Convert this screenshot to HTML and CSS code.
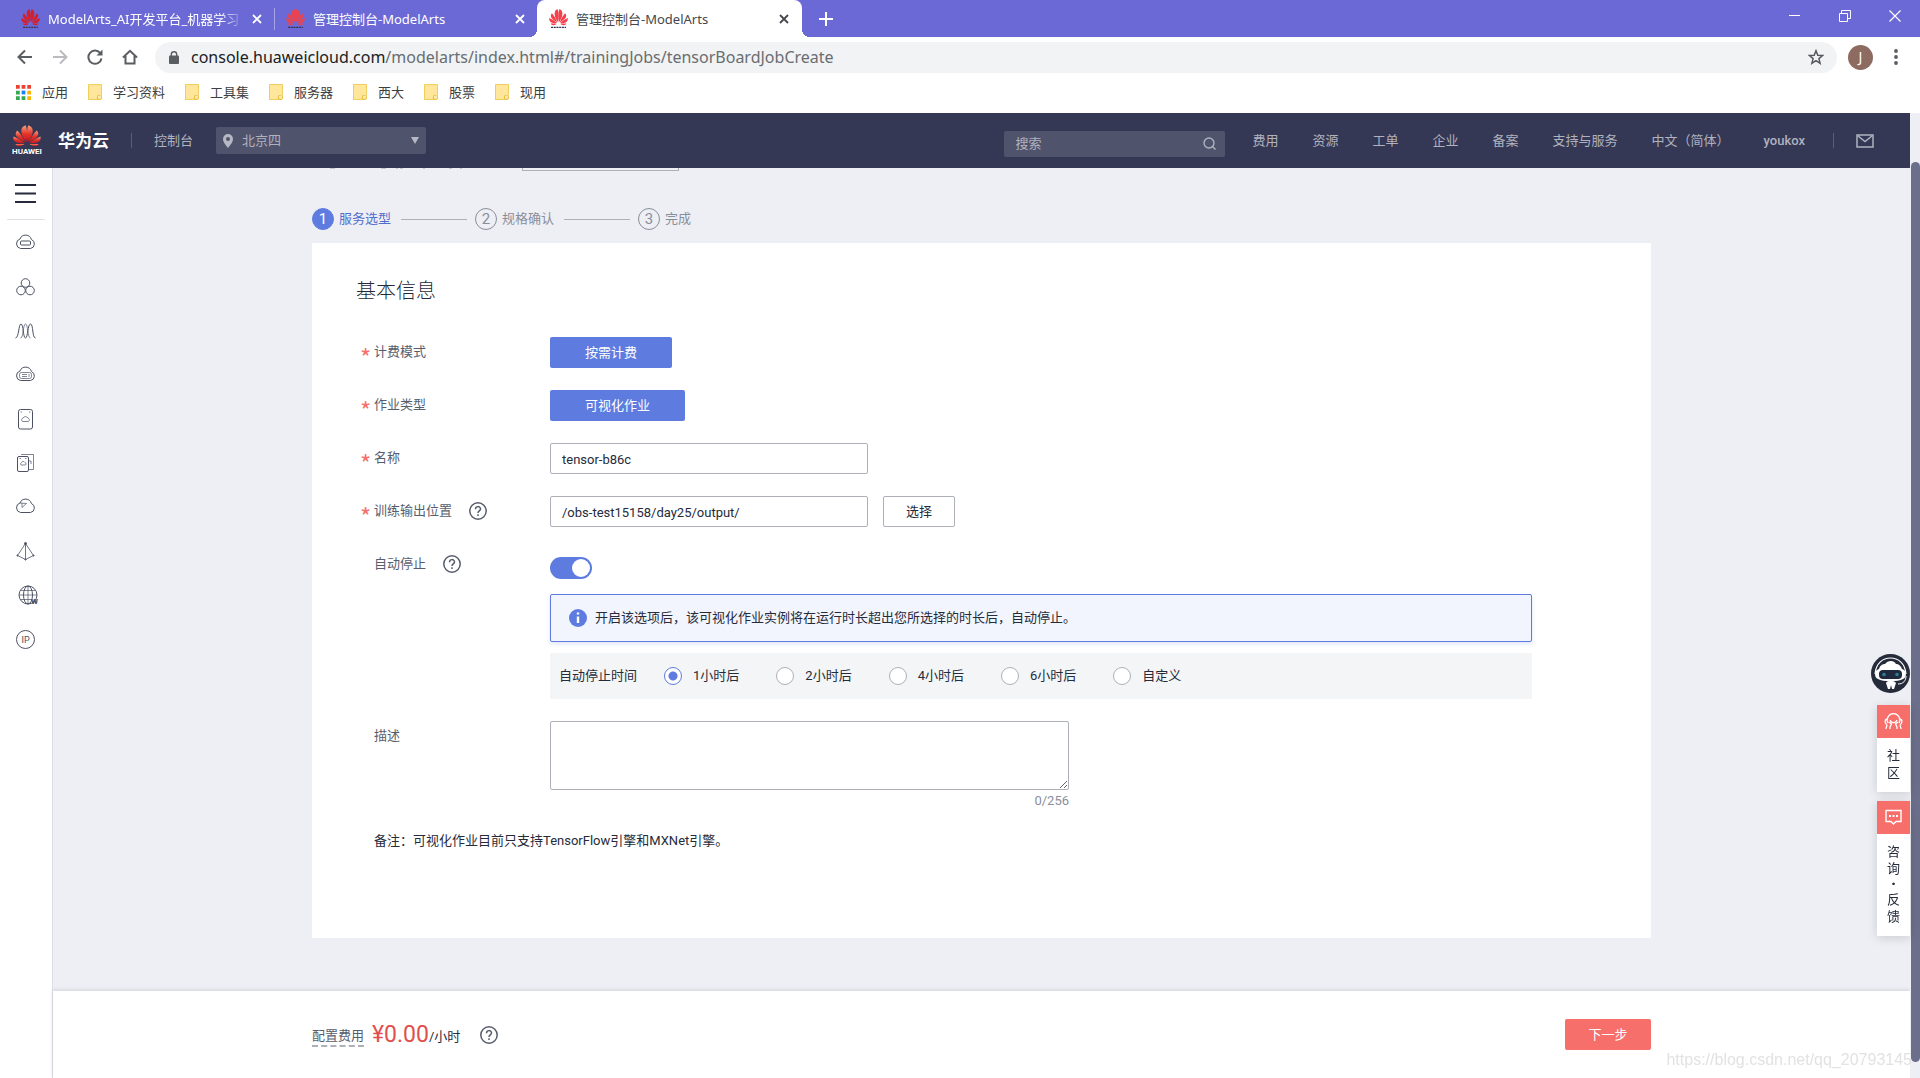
FILE: index.html
```html
<!DOCTYPE html>
<html lang="zh-CN">
<head>
<meta charset="utf-8">
<title>管理控制台-ModelArts</title>
<link rel="stylesheet" href="styles.css">
</head>
<body>
<svg class="defs" aria-hidden="true">
  <defs>
    <linearGradient id="petal" x1="0" y1="0" x2="0" y2="1"><stop offset="0" stop-color="#f6a07c"/><stop offset=".5" stop-color="#e4342c"/><stop offset="1" stop-color="#c5161d"/></linearGradient>
    <g id="flower">
      <path d="M13.4 19.5C9 14 7.6 8 8.6 4.400C9.400 2 11 .8 12.900.5C14.500 6 14.400 13 13.400 19.500Z"/>
      <path d="M14.600 19.500C19 14 20.400 8 19.400 4.400C18.600 2 17 .8 15.100.5C13.500 6 13.600 13 14.600 19.500Z"/>
      <path d="M12.300 19.900C10 14 7 9 4.300 6.200C2.500 8 2.200 10.400 3.400 12.600C5.200 15.700 8.800 18 12.300 19.900Z"/>
      <path d="M15.700 19.900C18 14 21 9 23.700 6.200C25.500 8 25.800 10.400 24.600 12.600C22.800 15.700 19.200 18 15.700 19.900Z"/>
      <path d="M11.800 20.800C8 17.500 4 14.600.6 13.200C-.2 15.600.8 18 2.900 19.400C5.400 20.900 8.800 21 11.800 20.800Z"/>
      <path d="M16.200 20.800C20 17.500 24 14.600 27.400 13.200C28.200 15.600 27.200 18 25.100 19.400C22.600 20.900 19.200 21 16.200 20.800Z"/>
      <path d="M11.600 21.700C8.500 21.500 5 21.400 2.300 21.500C3.300 23.400 4.900 24.300 6.700 24C8.700 23.700 10.200 22.700 11.600 21.700Z"/>
      <path d="M16.400 21.700C19.500 21.500 23 21.400 25.700 21.500C24.700 23.400 23.100 24.300 21.300 24C19.300 23.700 17.800 22.700 16.400 21.700Z"/>
    </g>
    <g id="favicon"><use href="#flower"/><path d="M3 27H25" stroke="#3b3350" stroke-width="2" stroke-dasharray="3 1"/></g>
    <g id="help"><circle cx="9" cy="9" r="8.200" fill="none" stroke="currentColor" stroke-width="1.500"/><path d="M6.500 7.200C6.500 3.800 11.500 3.800 11.500 7C11.500 8.900 9 8.900 9 11M9 12.300V13.900" fill="none" stroke="currentColor" stroke-width="1.500"/></g>
    <g id="folder"><path d="M.5 1.500H10.500V15.500H.5Z" fill="#ffe69a" stroke="#f0cf60"/><path d="M.5.5H10.500V11.500L8.500 15.500H.5Z" fill="#ffe69a" stroke="#f0cf60"/><rect x="9.500" y="11" width="4" height="4.500" rx="1.500" fill="#ffe9a8" stroke="#e8bf3a"/><path d="M10 1H13V11H10Z" fill="#ffe69a"/><path d="M10 .5H13.500V11" fill="none" stroke="#f0cf60"/></g>
    <g id="cross"><path d="M1 1L9 9M9 1L1 9" stroke="currentColor" stroke-width="1.800"/></g>
    <g id="cloud"><path d="M5.500 15.500H15.500A4.700 4.700 0 0 0 16.400 6.500A6 6 0 0 0 5 6A4.900 4.900 0 0 0 5.500 15.500Z"/></g>
  </defs>
</svg>

<header class="chrome">
  <div class="tabs">
    <div class="tab first">
      <svg class="fav" viewBox="0 0 28 28" fill="#d3202c"><use href="#favicon"/></svg>
      <span class="tab-title fade">ModelArts_AI开发平台_机器学习</span>
      <button class="tab-close" aria-label="关闭标签页"><svg width="10" height="10"><use href="#cross"/></svg></button>
    </div>
    <div class="tab second">
      <svg class="fav" viewBox="0 0 28 28" fill="#e8434e"><use href="#favicon"/></svg>
      <span class="tab-title">管理控制台-ModelArts</span>
      <button class="tab-close" aria-label="关闭标签页"><svg width="10" height="10"><use href="#cross"/></svg></button>
    </div>
    <div class="tab active">
      <svg class="fav" viewBox="0 0 28 28" fill="#f5404c"><use href="#favicon"/></svg>
      <span class="tab-title">管理控制台-ModelArts</span>
      <button class="tab-close" aria-label="关闭标签页"><svg width="10" height="10"><use href="#cross"/></svg></button>
    </div>
    <button class="new-tab" aria-label="新标签页"><svg width="14" height="14"><path d="M7 0V14M0 7H14" stroke="#fff" stroke-width="2"/></svg></button>
    <div class="window-buttons">
      <button aria-label="最小化"><svg width="12" height="12"><path d="M0 5.500H11" stroke="#fff"/></svg></button>
      <button aria-label="还原"><svg width="12" height="12" fill="none" stroke="#fff"><path d="M.5 3.500H8.500V11.500H.5ZM2.500 3.500V.5H11.500V8.500H8.500"/></svg></button>
      <button aria-label="关闭"><svg width="12" height="12"><path d="M.5.5L11.500 11.500M11.500.5L.5 11.500" stroke="#fff" stroke-width="1.200"/></svg></button>
    </div>
  </div>

  <div class="address-row">
    <button class="nav-button" aria-label="后退"><svg width="16" height="16" fill="none" stroke="#5a5d61" stroke-width="2"><path d="M15 8H2M8 1.500L1.500 8L8 14.500"/></svg></button>
    <button class="nav-button" aria-label="前进"><svg width="16" height="16" fill="none" stroke="#b9bbbe" stroke-width="2"><path d="M1 8H14M8 1.500L14.500 8L8 14.500"/></svg></button>
    <button class="nav-button" aria-label="刷新"><svg width="16" height="16" fill="none" stroke="#5a5d61" stroke-width="2"><path d="M13.500 4.500A6.600 6.600 0 1 0 14.500 9.500"/><path d="M15.500 .5V6.500H9.500Z" fill="#5a5d61" stroke="none"/></svg></button>
    <button class="nav-button" aria-label="主页"><svg width="16" height="16" fill="none" stroke="#5a5d61" stroke-width="2"><path d="M1 8.500L8 1.800L15 8.500M3.500 7V14.500H12.500V7"/></svg></button>
    <div class="omnibox">
      <svg width="10" height="13"><rect y="4.500" width="10" height="8.500" rx="1" fill="#5a5d61"/><path d="M2.300 5V3.400A2.700 2.700 0 0 1 7.700 3.400V5" fill="none" stroke="#5a5d61" stroke-width="1.400"/></svg>
      <span class="url"><b>console.huaweicloud.com</b>/modelarts/index.html#/trainingJobs/tensorBoardJobCreate</span>
      <button aria-label="收藏"><svg width="16" height="16" viewBox="0 0 16 16" fill="none" stroke="#55585c" stroke-width="1.500"><path d="M8 1.700L9.800 6.200L14.600 6.500L10.900 9.600L12.100 14.300L8 11.700L3.900 14.300L5.100 9.600L1.400 6.500L6.200 6.200Z"/></svg></button>
    </div>
    <button class="avatar">J</button>
    <button class="more" aria-label="更多"><svg width="4" height="16" fill="#5a5d61"><circle cx="2" cy="2" r="1.900"/><circle cx="2" cy="8" r="1.900"/><circle cx="2" cy="14" r="1.900"/></svg></button>
  </div>

  <nav class="bookmarks">
    <a href="#"><svg width="15" height="15" viewBox="0 0 16 16"><g fill="#ea4335"><path d="M0 0h4v4H0zM6 0h4v4H6zM12 0h4v4h-4z"/></g><path d="M0 6h4v4H0zM0 12h4v4H0zM6 12h4v4H6z" fill="#34a853"/><path d="M6 6h4v4H6z" fill="#1a82f0"/><path d="M12 6h4v4h-4zM12 12h4v4h-4z" fill="#fbb605"/></svg>应用</a>
    <a href="#"><svg width="14" height="16"><use href="#folder"/></svg>学习资料</a>
    <a href="#"><svg width="14" height="16"><use href="#folder"/></svg>工具集</a>
    <a href="#"><svg width="14" height="16"><use href="#folder"/></svg>服务器</a>
    <a href="#"><svg width="14" height="16"><use href="#folder"/></svg>西大</a>
    <a href="#"><svg width="14" height="16"><use href="#folder"/></svg>股票</a>
    <a href="#"><svg width="14" height="16"><use href="#folder"/></svg>现用</a>
  </nav>
</header>

<div class="viewport">
  <div class="app">
    <header class="topbar">
      <a class="logo" href="#" aria-label="HUAWEI">
        <svg width="28" height="22" viewBox="0 0 28 25" preserveAspectRatio="none" fill="url(#petal)"><use href="#flower"/></svg>
        <span class="logo-word">HUAWEI</span>
      </a>
      <span class="brand">华为云</span>
      <span class="divider"></span>
      <a class="console" href="#">控制台</a>
      <button class="region">
        <svg width="10" height="14"><path d="M5 0A5 5 0 0 0 0 5C0 8.500 5 14 5 14S10 8.500 10 5A5 5 0 0 0 5 0ZM5 3A2 2 0 1 1 5 7A2 2 0 0 1 5 3Z" fill="#b6b8c4" fill-rule="evenodd"/></svg>
        <span>北京四</span>
        <svg width="8" height="7"><path d="M0 0H8L4 7Z" fill="#b6b8c4"/></svg>
      </button>
      <div class="search">
        <input type="search" placeholder="搜索" aria-label="搜索">
        <svg width="13" height="13" fill="none" stroke="#b0b2be" stroke-width="1.400"><circle cx="6" cy="6" r="5"/><path d="M9 9L12.500 12.500"/></svg>
      </div>
      <nav class="topnav">
        <a href="#">费用</a><a href="#">资源</a><a href="#">工单</a><a href="#">企业</a><a href="#">备案</a><a href="#">支持与服务</a><a href="#">中文（简体）</a><a class="user" href="#">youkox</a>
      </nav>
      <span class="divider"></span>
      <a class="mail" href="#" aria-label="消息"><svg width="18" height="14" fill="none" stroke="#b0b2be" stroke-width="1.500"><rect x="1" y="1" width="16" height="12"/><path d="M1.500 1.500L9 7.500L16.500 1.500"/></svg></a>
    </header>

    <div class="workspace">
      <nav class="sidebar">
        <button class="menu" aria-label="菜单"><svg width="21" height="19"><path d="M0 1H21M0 9.500H21M0 18H21" stroke="#252b3a" stroke-width="2"/></svg></button>
        <a href="#" aria-label="弹性云服务器"><svg><use href="#cloud"/><rect x="5.500" y="8" width="10" height="4" rx="1"/></svg></a>
        <a href="#" aria-label="弹性伸缩"><svg><circle cx="10.500" cy="6" r="4.300"/><circle cx="6" cy="13.500" r="4.300"/><circle cx="15" cy="13.500" r="4.300"/></svg></a>
        <a href="#" aria-label="ModelArts"><svg><path d="M.5 17C4 17 3.500 3 6 3S8 17 10.500 17S12.500 3 15.500 3S17 17 20.500 17"/><path d="M5.500 17C8.500 17 8 3 10.500 3S12.500 17 15.500 17" stroke-width=".7"/></svg></a>
        <a href="#" aria-label="裸金属服务器"><svg><use href="#cloud"/><rect x="4.500" y="7.500" width="12" height="6" rx="2" stroke-width=".7"/><path d="M7 9.500H12M7 11.500H12M14 9V12" stroke-width=".7"/></svg></a>
        <a href="#" aria-label="云硬盘"><svg><rect x="3.500" y=".5" width="14" height="19.500" rx="2"/><path d="M7.500 12.500H13.500A2 2 0 0 0 13 9A3 3 0 0 0 8 9A2 2 0 0 0 7.500 12.500ZM5.500 3H7M14 3H15.500" stroke-width=".7"/></svg></a>
        <a href="#" aria-label="云硬盘备份"><svg><rect x="2.500" y="3.500" width="11" height="15" rx="1.500"/><path d="M6 1.500H18.500V16.500H14M6 12H10.500A1.500 1.500 0 0 0 10 9.500A2 2 0 0 0 6.500 9.500A1.500 1.500 0 0 0 6 12ZM4.500 5.500H6M10 5.500H11.500M14 8H16V11" stroke-width=".7"/></svg></a>
        <a href="#" aria-label="对象存储"><svg><use href="#cloud"/><path d="M5 6L11.500 6.500L7 10.500V6" stroke-width=".7"/></svg></a>
        <a href="#" aria-label="虚拟私有云"><svg><path d="M10.500 2.500L2.500 14.500L10.500 18.500L18.500 14.500ZM10.500 2.500V18.500" stroke-width=".8"/><circle cx="10.500" cy="2.500" r="1" fill="#4c5264"/><circle cx="2.500" cy="14.500" r=".6"/><circle cx="18.500" cy="14.500" r=".6"/><circle cx="10.500" cy="18.500" r=".6"/></svg></a>
        <a class="shift" href="#" aria-label="域名"><svg><circle cx="10" cy="10" r="9"/><ellipse cx="10" cy="10" rx="4.500" ry="9"/><path d="M1 10H19M10 1V19M3 5.500H17M3 14.500H14" stroke-width=".7"/><text x="13" y="19" class="tiny bold">W</text></svg></a>
        <a href="#" aria-label="弹性公网IP"><svg><circle cx="10.500" cy="10.500" r="9"/><text x="6.500" y="14" class="tiny">IP</text></svg></a>
      </nav>

      <main class="main">
        <div class="content">
          <div class="clipped"><svg width="150" height="3"><path d="M18 .5H23M69 .5H74M84 .5H86M88 .5H91M111 .5H113M137 .5H140M148 .5H150" stroke="#c3c6d1"/></svg><span class="clipped-box"></span></div>
          <ol class="steps">
            <li class="current"><i>1</i>服务选型</li>
            <li><i>2</i>规格确认</li>
            <li><i>3</i>完成</li>
          </ol>

          <form class="card">
            <h1>基本信息</h1>
            <div class="row">
              <span class="label required">计费模式</span>
              <div class="field"><button type="button" class="choice">按需计费</button></div>
            </div>
            <div class="row">
              <span class="label required">作业类型</span>
              <div class="field"><button type="button" class="choice">可视化作业</button></div>
            </div>
            <div class="row">
              <label class="label required" for="name">名称</label>
              <div class="field"><input class="text" id="name" type="text" value="tensor-b86c"></div>
            </div>
            <div class="row">
              <span class="label required"><label for="path">训练输出位置</label><svg class="help"><use href="#help"/></svg></span>
              <div class="field"><input class="text" id="path" type="text" value="/obs-test15158/day25/output/"><button type="button" class="pick">选择</button></div>
            </div>
            <div class="row">
              <span class="label"><label for="autostop">自动停止</label><svg class="help"><use href="#help"/></svg></span>
              <div class="stack">
                <input class="switch" id="autostop" type="checkbox" checked>
                <p class="notice"><svg width="18" height="18"><circle cx="9" cy="9" r="9" fill="#5e7ce0"/><path d="M9 3.500V5.500M9 7.500V14" stroke="#fff" stroke-width="2.400"/></svg>开启该选项后，该可视化作业实例将在运行时长超出您所选择的时长后，自动停止。</p>
                <div class="durations" role="radiogroup" aria-labelledby="duration-title">
                  <span class="duration-title" id="duration-title">自动停止时间</span>
                  <label><input type="radio" name="stop" checked>1小时后</label>
                  <label><input type="radio" name="stop">2小时后</label>
                  <label><input type="radio" name="stop">4小时后</label>
                  <label><input type="radio" name="stop">6小时后</label>
                  <label><input type="radio" name="stop">自定义</label>
                </div>
              </div>
            </div>
            <div class="row">
              <label class="label" for="desc">描述</label>
              <div class="description"><textarea id="desc"></textarea><span class="count">0/256</span></div>
            </div>
            <p class="remark">备注：可视化作业目前只支持TensorFlow引擎和MXNet引擎。</p>
          </form>
        </div>

        <footer class="footer">
          <div class="footer-inner">
            <span class="fee">配置费用</span>
            <strong class="price">¥0.00</strong>
            <span class="unit">/小时</span>
            <svg class="help"><use href="#help"/></svg>
            <button class="next">下一步</button>
          </div>
        </footer>
      </main>
    </div>
  </div>
  <div class="scrollbar"><div class="thumb"></div></div>
</div>

<aside class="floating">
  <button class="robot" aria-label="智能客服"><svg width="39" height="39"><circle cx="19.500" cy="19.500" r="19.500" fill="#252b3a"/><path d="M4 20C5 9 12 4 19.500 4S34 9 35 20" fill="none" stroke="#fff" stroke-width="1.200"/><path d="M7 25C3 24 3 16 8 15C9 11 12 10 14 10C17 6 23 6 25 10C28 10 30 12 31 15C36 16 36 24 32 25C27 28 12 28 7 25Z" fill="#fff"/><rect x="8" y="16" width="23" height="9" rx="4" fill="#1f2a3e"/><circle cx="13" cy="20.500" r="1.800" fill="#2f7c93"/><circle cx="26" cy="20.500" r="1.800" fill="#2f7c93"/><path d="M15 29C16 26 23 26 25 29L23 35H21L20 31L19 35H17Z" fill="#fff"/><path d="M35 22C35 27 32 30 27 30" fill="none" stroke="#fff"/></svg></button>
  <a class="tool" href="#"><span class="tool-icon"><svg width="19" height="19" fill="none" stroke="#fff" stroke-width="1.300"><path d="M4 11A6.300 6.300 0 1 1 15 11M6 8C7.500 11.500 11.500 11.500 13 8M3.500 7C.5 7 .5 11 2.500 12.500M15.500 7C18.500 7 18.500 11 16.500 12.500M2 17C2 15 3 15 3 12.500M6 17V15L7.500 12L5 10M17 17C17 15 16 15 16 12.500M13 17V15L11.500 12L14 10"/></svg></span><span class="tool-text">社<br>区</span></a>
  <a class="tool" href="#"><span class="tool-icon"><svg width="17" height="17" fill="none" stroke="#fff" stroke-width="1.400"><path d="M1 1.500H16V12.500H11L8.500 15L6 12.500H1Z"/><path d="M4 7H6M7.500 7H9.500M11 7H13" stroke-width="1.800"/></svg></span><span class="tool-text">咨<br>询<b>·</b>反<br>馈</span></a>
</aside>
<div class="watermark">https://blog.csdn.net/qq_20793145</div>
</body>
</html>
```
FILE: styles.css
```css
* { box-sizing: border-box; }
body {
  margin: 0;
  min-height: 100vh;
  display: flex;
  flex-direction: column;
  font: 13px/20px Roboto, "Noto Sans CJK SC", sans-serif;
  color: #252b3a;
  background: #fff;
}
.defs { position: absolute; width: 0; height: 0; }
button { border: 0; padding: 0; background: none; font: inherit; color: inherit; }
input, textarea { font: inherit; color: inherit; }
a { color: inherit; text-decoration: none; }
svg { flex: none; display: block; }
h1, p, ol { margin: 0; padding: 0; }

/* browser frame */
.chrome { font-family: "Noto Sans", "Noto Sans CJK SC", sans-serif; }
.tabs { display: flex; height: 37px; background: #6b69d6; color: #fff; }
.tab { display: flex; align-items: center; gap: 8px; padding-right: 13px; position: relative; }
.tab.first { width: 275px; padding-left: 21px; }
.tab.first::after { content: ""; position: absolute; right: 0; top: 8px; height: 22px; border-right: 1px solid #a5a4ea; }
.tab.second { width: 262px; padding-left: 11px; padding-right: 12px; }
.tab.active { width: 265px; padding-left: 12px; background: #fff; color: #45474b; border-radius: 8px 8px 0 0; }
.tab.active::before, .tab.active::after { content: ""; position: absolute; bottom: 0; width: 8px; height: 8px; }
.tab.active::before { right: 100%; background: radial-gradient(circle at 0 0, #6b69d6 8px, #fff 8px); }
.tab.active::after { left: 100%; background: radial-gradient(circle at 100% 0, #6b69d6 8px, #fff 8px); }
.fav { width: 19px; height: 19px; }
.tab-title { flex: 1; min-width: 0; overflow: hidden; white-space: nowrap; }
.fade { mask-image: linear-gradient(to right, #000 88%, transparent); }
.new-tab { margin-left: 17px; }
.window-buttons { margin-left: auto; display: flex; align-items: center; gap: 38px; padding: 0 19px 5px 0; }
.address-row { display: flex; align-items: center; height: 40px; padding: 0 22px 0 17px; }
.nav-button { width: 16px; margin-right: 19px; }
.omnibox { flex: 1; display: flex; align-items: center; height: 31px; padding: 0 13px 0 14px; border-radius: 16px; background: #f1f3f4; }
.url { flex: 1; margin-left: 12px; font-size: 16px; color: #6a6d71; }
.url b { font-weight: 400; color: #202124; }
.nav-button:nth-child(4) { margin-right: 17px; }
.avatar { width: 25px; height: 25px; margin: 0 21px 0 11px; border-radius: 50%; background: #8d6b60; color: #fff; font-size: 14px; }
.bookmarks { display: flex; gap: 20px; align-items: center; height: 36px; padding: 0 16px 6px; color: #3c4043; }
.bookmarks a { display: flex; align-items: center; gap: 11px; }

/* page area */
.viewport { flex: 1; display: flex; }
.app { flex: 1; min-width: 0; display: flex; flex-direction: column; }
.scrollbar { width: 10px; padding: 49px 0 16px 1px; display: flex; background: #eeeff5; }
.thumb { flex: 1; border-radius: 5px; background: #6c6f8b; }

.topbar { display: flex; align-items: center; height: 55px; padding: 0 36px 0 12px; background: #343855; color: #b0b2be; }
.logo { width: 30px; display: flex; flex-direction: column; align-items: center; padding-top: 1px; }
.logo-word { font-size: 8px; line-height: 10px; font-weight: 700; color: #fff; }
.brand { margin: 0 22px 0 16px; font-size: 17px; font-weight: 700; color: #fff; }
.divider { width: 1px; height: 15px; background: #5a5e78; }
.console { margin: 0 23px 0 22px; }
.region { width: 210px; height: 27px; display: flex; align-items: center; padding: 0 7px; gap: 9px; border-radius: 2px; background: #50536c; }
.region span { flex: 1; text-align: left; }
.search { width: 221px; height: 26px; margin: 6px 27px 0 auto; padding: 0 9px 0 11px; display: flex; align-items: center; border-radius: 2px; background: #50536c; }
.search input { flex: 1; min-width: 0; padding: 0; border: 0; outline: 0; background: none; }
.search input::placeholder { color: #b0b2be; }
.topnav { display: flex; gap: 34px; margin-right: 28px; }
.user { font-weight: 500; }
.mail { margin-left: 22px; }

.workspace { flex: 1; display: flex; }
.sidebar { width: 53px; display: flex; flex-direction: column; align-items: center; border-right: 1px solid #dcdee6; background: #fff; }
.menu { width: 38px; height: 52px; padding-left: 8px; border-bottom: 1px solid #dfe1e6; }
.sidebar a { height: 44px; display: flex; align-items: center; padding-right: 2px; }
.menu + a { margin-top: 1px; }
.sidebar a svg { width: 21px; height: 21px; fill: none; stroke: #4c5264; stroke-width: 1; }
.sidebar .shift { padding: 0 0 0 4px; }
.sidebar .tiny { font: 9px Roboto, sans-serif; fill: #4c5264; stroke: none; }
.sidebar .bold { font-weight: 900; font-size: 8px; }

.main { flex: 1; min-width: 0; display: flex; flex-direction: column; background: #eeeff5; }
.content, .footer-inner { width: 100%; max-width: 1339px; margin: 0 auto; }
.content { flex: 1; padding-bottom: 53px; }
.clipped { display: flex; gap: 60px; height: 3px; }
.clipped-box { width: 157px; border: 1px solid #adb0b8; border-top: 0; }

.steps { display: flex; align-items: center; list-style: none; height: 22px; margin: 37px 0 13px; color: #8a8e99; }
.steps li { display: flex; align-items: center; gap: 5px; }
.steps li:not(:last-child)::after { content: ""; width: 66px; height: 1px; margin: 0 8px 0 5px; background: #adb0b8; }
.steps i { width: 22px; height: 22px; border: 1px solid #8a8e99; border-radius: 50%; font-style: normal; font-size: 15px; text-align: center; }
.steps .current { color: #526ecc; }
.steps .current i { border-color: #5e7ce0; background: #5e7ce0; color: #fff; }

.card { display: flex; flex-direction: column; gap: 22px; padding: 33px 119px 83px 44px; background: #fff; }
.card h1 { margin-bottom: 9px; font-size: 20px; line-height: 30px; font-weight: 300; }
.row { display: flex; }
.label { width: 194px; padding-left: 18px; display: flex; align-items: center; height: 30px; color: #575d6c; }
.required { padding-left: 4px; }
.required::before { content: "*"; width: 14px; height: 16px; font: 24px/26px "Noto Sans CJK SC", sans-serif; color: #f66f6a; }
.help { width: 18px; height: 18px; margin-left: 20px; color: #575d6c; }
.label .help { margin-left: 17px; }
.field { display: flex; gap: 15px; }
.choice { height: 31px; padding: 0 35px; border-radius: 2px; background: #5e7ce0; color: #fff; }
.text { width: 318px; height: 31px; padding: 2px 11px 0; border: 1px solid #adb0b8; border-radius: 2px; }
.pick { width: 72px; height: 31px; border: 1px solid #adb0b8; border-radius: 2px; }
.stack { flex: 1; display: flex; flex-direction: column; }
.switch { appearance: none; width: 42px; height: 22px; margin: 8px 0 15px; padding: 2px; display: flex; justify-content: flex-end; border-radius: 11px; background: #5e7ce0; }
.switch::before { content: ""; width: 18px; height: 18px; border-radius: 50%; background: #fff; }
.notice { display: flex; align-items: center; gap: 8px; height: 48px; padding-left: 18px; border: 1px solid #5e7ce0; border-radius: 2px; background: #f2f5fe; box-shadow: 0 2px 4px #5e7ce033; }
.durations { display: flex; align-items: center; height: 46px; margin-top: 11px; padding-left: 9px; background: #f3f5f6; }
.duration-title { margin-right: 27px; }
.durations label { display: flex; align-items: center; gap: 11px; margin-right: 37px; }
.durations input { appearance: none; width: 18px; height: 18px; margin: 0; border: 1px solid #adb0b8; border-radius: 50%; background: #fff; }
.durations input:checked { border-color: #5e7ce0; background: radial-gradient(circle, #5e7ce0 4px, #fff 5px); }
.description { display: flex; flex-direction: column; margin-bottom: -6px; }
.description textarea { width: 519px; height: 69px; border: 1px solid #adb0b8; border-radius: 2px; }
.count { align-self: flex-end; margin-top: 1px; color: #8a8e99; }
.remark { padding-left: 18px; line-height: 28px; }

.footer { padding: 28px 0; background: #fff; box-shadow: 0 -1px 4px #0000001f; }
.footer-inner { display: flex; align-items: center; }
.fee { border-bottom: 2px dashed #adb0b8; line-height: 18px; margin: 5px 8px 0 0; color: #575d6c; }
.price { font-size: 23px; font-weight: 400; color: #e0504c; }
.unit { margin-top: 5px; }
.next { width: 86px; height: 31px; margin-left: auto; border-radius: 2px; background: #f66f6a; color: #fff; }

/* overlays above the page */
.floating { position: fixed; right: 10px; top: 654px; display: flex; flex-direction: column; align-items: flex-end; }
.robot { margin-bottom: 12px; }
.tool { width: 33px; margin-bottom: 9px; background: #fff; box-shadow: 0 2px 10px #00000026; }
.tool-icon { display: flex; justify-content: center; align-items: center; height: 33px; background: #f66f6a; }
.tool-text { display: block; padding: 9px 0 11px; text-align: center; line-height: 17px; }
.tool-text b { display: block; line-height: 14px; font-size: 17px; }
.watermark { position: fixed; right: 8px; bottom: 8px; font: 16px/20px "Liberation Sans", sans-serif; color: #e2e2e2; }
```
